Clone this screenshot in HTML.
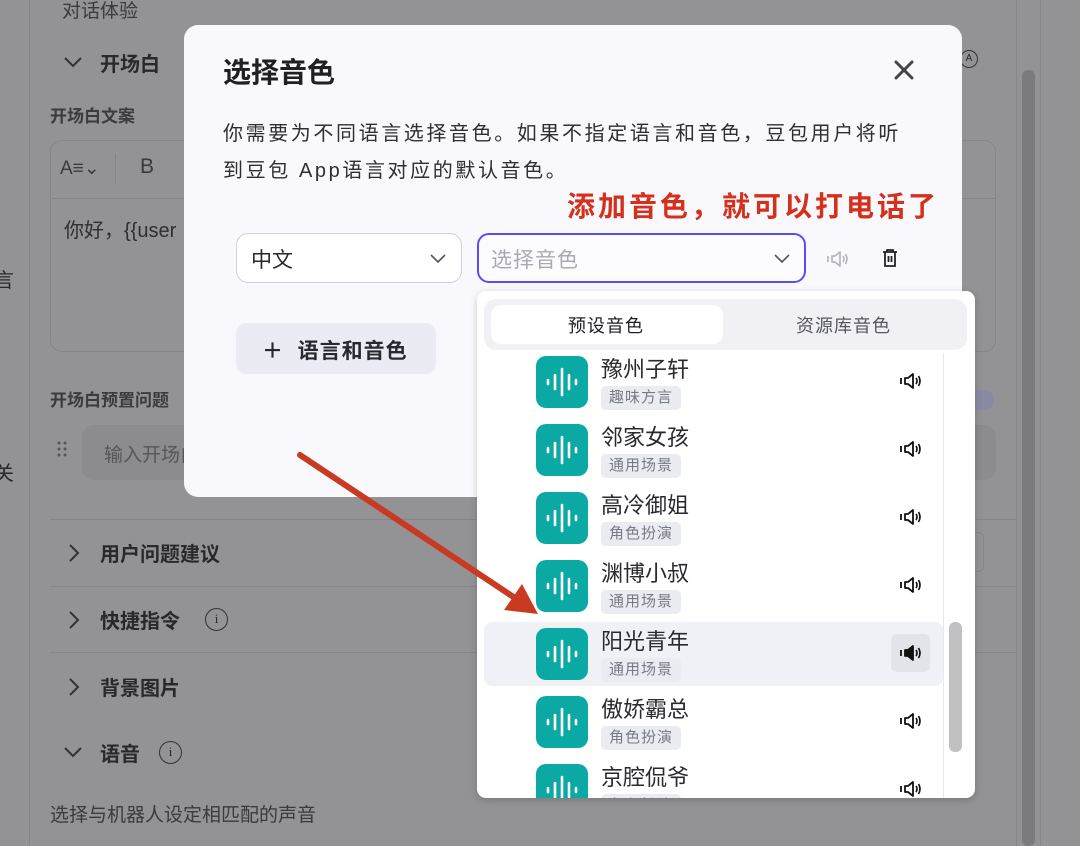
<!DOCTYPE html>
<html><head><meta charset="utf-8"><style>
*{box-sizing:border-box;margin:0;padding:0}
body{width:1080px;height:846px;overflow:hidden;background:#939395;font-family:"Liberation Sans","Noto Sans CJK SC",sans-serif;position:relative;color:#29292d}
.a{position:absolute;white-space:nowrap}
.b{font-weight:bold}
.line{position:absolute;background:#86868a;height:1px}
.modal{position:absolute;left:184px;top:25px;width:778px;height:472px;background:#f9f9fd;border-radius:14px}
.dd{position:absolute;left:477px;top:291px;width:498px;height:507px;background:#fff;border-radius:9px;box-shadow:0 2px 8px rgba(0,0,0,.18);overflow:hidden}
.ic{position:absolute;left:59px;width:52px;height:52px;background:#0aa9a4;border-radius:10px}
.nm{position:absolute;left:124px;font-size:22px;color:#2a2a2e}
.tg{position:absolute;left:124px;font-size:15px;color:#777a85;background:#ebebf2;border-radius:5px;padding:1px 8px;height:24px;line-height:22px;letter-spacing:1px}
.sp{position:absolute;left:423px}
</style></head><body>
<!-- background page -->
<div class="line" style="left:29px;top:0;width:1px;height:846px"></div>
<div class="line" style="left:1016px;top:0;width:1px;height:846px"></div>
<div class="line" style="left:1040px;top:0;width:1px;height:846px"></div>
<div class="a" style="left:1022px;top:70px;width:13px;height:776px;background:#7b7b7d;border-radius:6px"></div>
<div class="a" style="left:62px;top:-4px;font-size:19px;color:#3a3a3f">对话体验</div>
<svg class="a" style="left:63px;top:56px" width="20" height="12"><path d="M2 2L10 10L18 2" stroke="#333" stroke-width="2" fill="none"/></svg>
<div class="a b" style="left:100px;top:48px;font-size:20px">开场白</div>
<div class="a b" style="left:50px;top:102px;font-size:17px;color:#3a3a3f">开场白文案</div>
<div class="a" style="left:50px;top:140px;width:946px;height:212px;border:1px solid #85858a;border-radius:12px"></div>
<div class="line" style="left:51px;top:198px;width:944px"></div>
<div class="a" style="left:60px;top:157px;font-size:19px;color:#3a3a3f">A≡⌄</div>
<div class="a" style="left:115px;top:154px;width:1px;height:30px;background:#85858a"></div>
<div class="a" style="left:140px;top:155px;font-size:21px;color:#3a3a3f">B</div>
<div class="a" style="left:64px;top:214px;font-size:20px;color:#2e2e33">你好，{{user</div>
<div class="a" style="left:-6px;top:264px;font-size:20px">言</div>
<div class="a" style="left:-6px;top:457px;font-size:20px">关</div>
<div class="a b" style="left:50px;top:386px;font-size:17px;color:#3a3a3f">开场白预置问题</div>
<div class="a" style="left:960px;top:390px;width:34px;height:20px;background:#8a8aa5;border-radius:10px"></div>
<svg class="a" style="left:56px;top:440px" width="12" height="18"><g fill="#555"><circle cx="3" cy="3" r="1.5"/><circle cx="9" cy="3" r="1.5"/><circle cx="3" cy="9" r="1.5"/><circle cx="9" cy="9" r="1.5"/><circle cx="3" cy="15" r="1.5"/><circle cx="9" cy="15" r="1.5"/></g></svg>
<div class="a" style="left:82px;top:425px;width:914px;height:55px;background:#8c8c8e;border-radius:12px"></div>
<div class="a" style="left:104px;top:440px;font-size:19px;color:#55555a">输入开场白</div>
<div class="line" style="left:50px;top:519px;width:966px"></div>
<div class="line" style="left:50px;top:586px;width:966px"></div>
<div class="line" style="left:50px;top:652px;width:966px"></div>
<div class="a" style="left:964px;top:532px;width:20px;height:40px;border:1px solid #85858a;border-radius:6px"></div>
<svg class="a" style="left:68px;top:543px" width="12" height="20"><path d="M2 2L10 10L2 18" stroke="#333" stroke-width="2" fill="none"/></svg>
<div class="a b" style="left:100px;top:538px;font-size:20px">用户问题建议</div>
<svg class="a" style="left:68px;top:610px" width="12" height="20"><path d="M2 2L10 10L2 18" stroke="#333" stroke-width="2" fill="none"/></svg>
<div class="a b" style="left:100px;top:605px;font-size:20px">快捷指令</div>
<div class="a" style="left:205px;top:608px;width:23px;height:23px;border:1.5px solid #333;border-radius:50%;font-size:13px;text-align:center;line-height:20px;font-family:'Liberation Serif',serif">i</div>
<svg class="a" style="left:68px;top:677px" width="12" height="20"><path d="M2 2L10 10L2 18" stroke="#333" stroke-width="2" fill="none"/></svg>
<div class="a b" style="left:100px;top:672px;font-size:20px">背景图片</div>
<svg class="a" style="left:63px;top:746px" width="20" height="12"><path d="M2 2L10 10L18 2" stroke="#333" stroke-width="2" fill="none"/></svg>
<div class="a b" style="left:100px;top:738px;font-size:20px">语音</div>
<div class="a" style="left:159px;top:741px;width:23px;height:23px;border:1.5px solid #333;border-radius:50%;font-size:13px;text-align:center;line-height:20px;font-family:'Liberation Serif',serif">i</div>
<div class="a" style="left:50px;top:800px;font-size:19px;color:#3a3a3f">选择与机器人设定相匹配的声音</div>
<div class="a" style="left:960px;top:50px;width:18px;height:18px;border:1.5px solid #333;border-radius:50%;font-size:10px;text-align:center;line-height:15px">A</div>

<!-- modal -->
<div class="modal">
 <div class="a b" style="left:39px;top:26px;font-size:28px;color:#1f1f24">选择音色</div>
 <svg class="a" style="left:710px;top:35px" width="20" height="20"><path d="M2 2L18 18M18 2L2 18" stroke="#444" stroke-width="3" stroke-linecap="round"/></svg>
 <div class="a" style="left:39px;top:91px;font-size:20px;line-height:37px;color:#2e2e33;letter-spacing:2.6px">你需要为不同语言选择音色。如果不指定语言和音色，豆包用户将听<br>到豆包 App语言对应的默认音色。</div>
 <div class="a b" style="left:383px;top:160px;font-size:28px;color:#d4301c;letter-spacing:3px">添加音色，就可以打电话了</div>
 <div class="a" style="left:52px;top:208px;width:226px;height:50px;border:1px solid #cfd0dc;border-radius:12px;background:#fff"></div>
 <div class="a" style="left:67px;top:219px;font-size:21px">中文</div>
 <svg class="a" style="left:246px;top:229px" width="16" height="10"><path d="M1 1L8 8L15 1" stroke="#555" stroke-width="1.6" fill="none"/></svg>
 <div class="a" style="left:293px;top:208px;width:329px;height:50px;border:2px solid #5b4cf5;border-radius:12px;background:#fcfcff"></div>
 <div class="a" style="left:307px;top:219px;font-size:21px;color:#a8a9b3;letter-spacing:1px">选择音色</div>
 <svg class="a" style="left:590px;top:229px" width="16" height="10"><path d="M1 1L8 8L15 1" stroke="#555" stroke-width="1.6" fill="none"/></svg>
 <svg class="a" style="left:643px;top:224px" width="22" height="20"><path d="M1 7V13M5 7H8L13 3V17L8 13H5Z" stroke="#b5b5bd" stroke-width="1.7" fill="none" stroke-linejoin="round"/><path d="M16 7Q18 10 16 13M18.5 5Q21.5 10 18.5 15" stroke="#b5b5bd" stroke-width="1.6" fill="none"/></svg>
 <svg class="a" style="left:698px;top:224px" width="16" height="18"><path d="M1 3H15M5 3V1H11V3M3 3V17H13V3M6.5 7V13M9.5 7V13" stroke="#222" stroke-width="1.8" fill="none"/></svg>
 <div class="a" style="left:52px;top:298px;width:200px;height:51px;background:#ebebf3;border-radius:10px"></div>
 <div class="a b" style="left:78px;top:310px;font-size:21px;letter-spacing:1px">＋&nbsp; 语言和音色</div>
</div>

<!-- dropdown -->
<div class="dd">
 <div class="a" style="left:7px;top:8px;width:483px;height:51px;background:#f0f0f5;border-radius:12px"></div>
 <div class="a" style="left:14px;top:14px;width:232px;height:39px;background:#fff;border-radius:10px"></div>
 <div class="a" style="left:91px;top:21px;font-size:18px;color:#1f1f24;letter-spacing:1px">预设音色</div>
 <div class="a" style="left:319px;top:21px;font-size:18px;color:#55565e;letter-spacing:1px">资源库音色</div>
 <div class="a" style="left:466px;top:62px;width:1px;height:445px;background:#e8e8ec"></div>
 <div class="a" style="left:7px;top:331px;width:459px;height:64px;background:#f0f1f6;border-radius:8px"></div>
 <div class="a" style="left:414px;top:343px;width:39px;height:38px;background:#e3e4ea;border-radius:6px"></div>
 <div class="a" style="left:472px;top:331px;width:13px;height:130px;background:#c1c1c3;border-radius:6px"></div>
 <div id="list"></div>
</div>

<!-- arrow -->
<svg class="a" style="left:0;top:0" width="1080" height="846"><path d="M300 455L515 598" stroke="#c93a22" stroke-width="6" stroke-linecap="round"/><path d="M538 614L504 610L522 584Z" fill="#c93a22"/></svg>
<script>
var items=[["豫州子轩","趣味方言"],["邻家女孩","通用场景"],["高冷御姐","角色扮演"],["渊博小叔","通用场景"],["阳光青年","通用场景"],["傲娇霸总","角色扮演"],["京腔侃爷","角色扮演"]];
var h="";
items.forEach(function(it,i){var t=65+i*68;
h+='<div class="ic" style="top:'+t+'px"><svg width="52" height="52"><g stroke="#fff" stroke-width="2.6" stroke-linecap="round"><path d="M12 24V28M19 19V33M26 13V39M33 19V33M40 24V28"/></g></svg></div>';
h+='<div class="nm" style="top:'+(t-4)+'px">'+it[0]+'</div>';
h+='<div class="tg" style="top:'+(t+30)+'px">'+it[1]+'</div>';
var f=i==4?'#111':'none';
h+='<svg class="sp" style="top:'+(t+15)+'px" width="22" height="20"><path d="M1 7V13M5 7H8L13 3V17L8 13H5Z" stroke="#111" stroke-width="1.8" fill="'+f+'" stroke-linejoin="round"/><path d="M16 7Q18 10 16 13M18.5 5Q21.5 10 18.5 15" stroke="#111" stroke-width="1.7" fill="none"/></svg>';
});
document.getElementById("list").innerHTML=h;
</script>
</body></html>
